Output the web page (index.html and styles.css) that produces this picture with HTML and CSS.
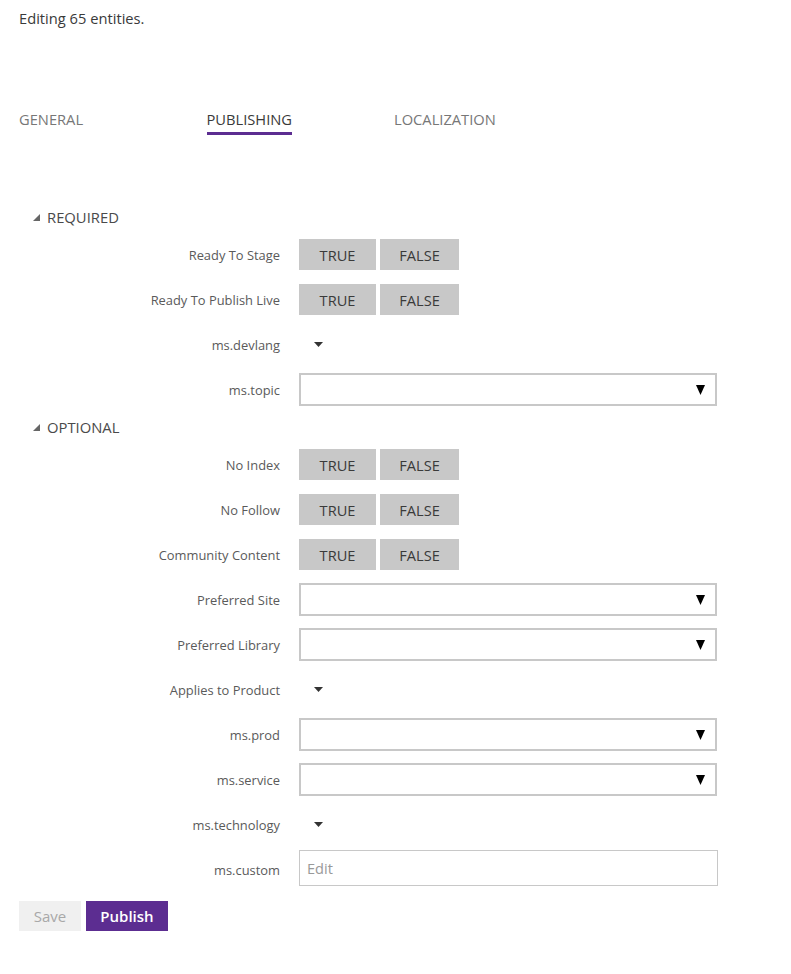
FILE: index.html
```html
<!DOCTYPE html>
<html>
<head>
<meta charset="utf-8">
<link rel="stylesheet" href="styles.css">
</head>
<body>
<p class="info">Editing 65 entities.</p>
<nav class="tabs">
  <div class="tab"><span>GENERAL</span></div>
  <div class="tab active"><span>PUBLISHING</span></div>
  <div class="tab"><span>LOCALIZATION</span></div>
</nav>

<section class="group">
  <div class="group-head"><svg class="tri" width="7" height="7" viewBox="0 0 7 7"><polygon points="7,0 7,7 0,7"/></svg>REQUIRED</div>
  <div class="row"><label>Ready To Stage</label><div class="toggle"><button class="tbtn t">TRUE</button><button class="tbtn f">FALSE</button></div></div>
  <div class="row"><label>Ready To Publish Live</label><div class="toggle"><button class="tbtn t">TRUE</button><button class="tbtn f">FALSE</button></div></div>
  <div class="row"><label>ms.devlang</label><div class="caret"><svg width="9" height="5" viewBox="0 0 9 5"><polygon points="0,0 9,0 4.5,5"/></svg></div></div>
  <div class="row"><label>ms.topic</label><div class="select"><svg width="9" height="10" viewBox="0 0 9 10"><polygon points="0,0 9,0 4.5,10"/></svg></div></div>
</section>

<section class="group">
  <div class="group-head"><svg class="tri" width="7" height="7" viewBox="0 0 7 7"><polygon points="7,0 7,7 0,7"/></svg>OPTIONAL</div>
  <div class="row"><label>No Index</label><div class="toggle"><button class="tbtn t">TRUE</button><button class="tbtn f">FALSE</button></div></div>
  <div class="row"><label>No Follow</label><div class="toggle"><button class="tbtn t">TRUE</button><button class="tbtn f">FALSE</button></div></div>
  <div class="row"><label>Community Content</label><div class="toggle"><button class="tbtn t">TRUE</button><button class="tbtn f">FALSE</button></div></div>
  <div class="row"><label>Preferred Site</label><div class="select"><svg width="9" height="10" viewBox="0 0 9 10"><polygon points="0,0 9,0 4.5,10"/></svg></div></div>
  <div class="row"><label>Preferred Library</label><div class="select"><svg width="9" height="10" viewBox="0 0 9 10"><polygon points="0,0 9,0 4.5,10"/></svg></div></div>
  <div class="row"><label>Applies to Product</label><div class="caret"><svg width="9" height="5" viewBox="0 0 9 5"><polygon points="0,0 9,0 4.5,5"/></svg></div></div>
  <div class="row"><label>ms.prod</label><div class="select"><svg width="9" height="10" viewBox="0 0 9 10"><polygon points="0,0 9,0 4.5,10"/></svg></div></div>
  <div class="row"><label>ms.service</label><div class="select"><svg width="9" height="10" viewBox="0 0 9 10"><polygon points="0,0 9,0 4.5,10"/></svg></div></div>
  <div class="row"><label>ms.technology</label><div class="caret"><svg width="9" height="5" viewBox="0 0 9 5"><polygon points="0,0 9,0 4.5,5"/></svg></div></div>
  <div class="row"><label>ms.custom</label><input class="edit" type="text" placeholder="Edit"></div>
</section>

<div class="actions">
  <button class="btn save">Save</button>
  <button class="btn publish">Publish</button>
</div>
</body>
</html>
```
FILE: styles.css
```css
* { box-sizing: border-box; }
body {
  margin: 0;
  padding: 0 19px;
  font-family: "Segoe UI", "Open Sans", "Noto Sans", sans-serif;
  color: #333;
  background: #fff;
}
.info {
  margin: 0;
  padding-top: 8px;
  font-size: 14.7px;
  line-height: 21px;
  color: #3a3a3a;
}
.tabs {
  display: flex;
  margin-top: 80px;
}
.tab {
  width: 187.5px;
  font-size: 14.7px;
  line-height: 21px;
  color: #777;
}
.tab span {
  display: inline-block;
  padding-bottom: 2px;
  border-bottom: 3px solid transparent;
}
.tab.active { color: #3a3a3a; }
.tab.active span { border-bottom-color: #5c2d91; }

.tabs + .group { margin-top: 67px; }
.group-head {
  height: 30px;
  display: flex;
  align-items: center;
  padding-left: 14px;
  font-size: 14.8px;
  color: #4a4a4a;
}
.tri { fill: #666; margin-right: 7px; margin-top: 1px; }
.row {
  height: 45px;
  display: grid;
  grid-template-columns: 261px 1fr;
  column-gap: 19px;
  align-items: center;
}
.row label {
  text-align: right;
  font-size: 12.9px;
  color: #5a5a5a;
  padding-top: 1px;
}
.toggle { display: flex; gap: 4px; }
.tbtn {
  height: 31px;
  border: 0;
  background: #c8c8c8;
  color: #3a3a3a;
  font-family: inherit;
  font-size: 14.6px;
  padding: 0;
}
.tbtn.t { width: 77px; }
.tbtn.f { width: 79px; }
.caret {
  padding-left: 15px;
  display: flex;
  align-items: center;
}
.caret svg { fill: #333; }
.select {
  width: 418px;
  height: 33px;
  border: 2px solid #c8c8c8;
  display: flex;
  align-items: center;
  justify-content: flex-end;
  padding-right: 10px;
}
.select svg { fill: #000; }
.edit {
  width: 419px;
  height: 36px;
  border: 1px solid #c8c8c8;
  padding: 0 7px;
  font-family: inherit;
  font-size: 14.6px;
  color: #333;
  outline: none;
  margin-top: -3px;
}
.edit::placeholder { color: #999; }
.actions {
  display: flex;
  gap: 5px;
  margin-top: 9px;
}
.btn {
  height: 30px;
  border: 0;
  font-family: inherit;
  font-size: 15px;
  padding: 0;
}
.save { width: 62px; background: #f0f0f0; color: #a8a8a8; }
.publish { width: 82px; background: #5c2d91; color: #fff; font-weight: 600; }
```
